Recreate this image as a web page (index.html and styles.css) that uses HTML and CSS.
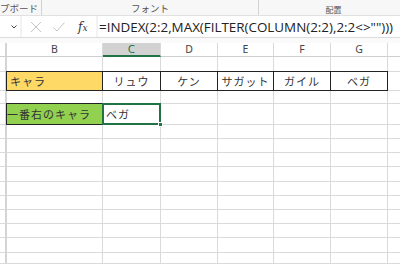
FILE: index.html
```html
<!DOCTYPE html>
<html lang="ja">
<head>
<meta charset="utf-8">
<link rel="stylesheet" href="styles.css">
</head>
<body>
<div class="app">
<div class="top">
  <div class="toolbar">
    <div class="grp g1"><span class="glabel">プボード</span></div>
    <div class="grp g2"><span class="glabel">フォント</span></div>
    <div class="grp g3"><span class="glabel small">配置</span></div>
  </div>
  <div class="fbar">
    <div class="namebox">
      <svg class="chev" width="6" height="4" viewBox="0 0 6 4"><polyline points="0.5,0.5 3,3 5.5,0.5" fill="none" stroke="#444" stroke-width="1"/></svg>
    </div>
    <div class="fbtns">
      <svg class="ico" width="12" height="12" viewBox="0 0 12 12"><path d="M1 1 L11 11 M11 1 L1 11" stroke="#c4c4c4" stroke-width="1" fill="none"/></svg>
      <svg class="ico" width="12" height="12" viewBox="0 0 12 12"><path d="M0.5 6.5 L4 10 L11.5 1.5" stroke="#c4c4c4" stroke-width="1" fill="none"/></svg>
      <span class="fx">f<span class="fxx">x</span></span>
    </div>
    <div class="formula">=INDEX(2:2,MAX(FILTER(COLUMN(2:2),2:2&lt;&gt;"")))</div>
  </div>
  <div class="gap"></div>
</div>
<div class="sheet">
  <div class="c hdr rh"></div>
  <div class="c hdr">B</div>
  <div class="c hdr sel">C</div>
  <div class="c hdr">D</div>
  <div class="c hdr">E</div>
  <div class="c hdr">F</div>
  <div class="c hdr">G</div>
  <div class="c hdr last"></div>

  <div class="c rh"></div><div class="c"></div><div class="c"></div><div class="c"></div><div class="c"></div><div class="c"></div><div class="c"></div><div class="c last"></div>

  <div class="c rh"></div>
  <div class="c bd yellow left">キャラ</div>
  <div class="c bd ctr">リュウ</div>
  <div class="c bd ctr">ケン</div>
  <div class="c bd ctr">サガット</div>
  <div class="c bd ctr">ガイル</div>
  <div class="c bd ctr">ベガ</div>
  <div class="c last"></div>

  <div class="c rh"></div><div class="c"></div><div class="c"></div><div class="c"></div><div class="c"></div><div class="c"></div><div class="c"></div><div class="c last"></div>

  <div class="c rh"></div>
  <div class="c bd green left2">一番右のキャラ</div>
  <div class="c active left">ベガ<span class="handle"></span></div>
  <div class="c"></div><div class="c"></div><div class="c"></div><div class="c"></div><div class="c last"></div>

  <div class="c rh"></div><div class="c"></div><div class="c"></div><div class="c"></div><div class="c"></div><div class="c"></div><div class="c"></div><div class="c last"></div>
  <div class="c rh"></div><div class="c"></div><div class="c"></div><div class="c"></div><div class="c"></div><div class="c"></div><div class="c"></div><div class="c last"></div>
  <div class="c rh"></div><div class="c"></div><div class="c"></div><div class="c"></div><div class="c"></div><div class="c"></div><div class="c"></div><div class="c last"></div>
  <div class="c rh"></div><div class="c"></div><div class="c"></div><div class="c"></div><div class="c"></div><div class="c"></div><div class="c"></div><div class="c last"></div>
  <div class="c rh"></div><div class="c"></div><div class="c"></div><div class="c"></div><div class="c"></div><div class="c"></div><div class="c"></div><div class="c last"></div>
  <div class="c rh"></div><div class="c"></div><div class="c"></div><div class="c"></div><div class="c"></div><div class="c"></div><div class="c"></div><div class="c last"></div>
  <div class="c rh"></div><div class="c"></div><div class="c"></div><div class="c"></div><div class="c"></div><div class="c"></div><div class="c"></div><div class="c last"></div>
  <div class="c rh"></div><div class="c"></div><div class="c"></div><div class="c"></div><div class="c"></div><div class="c"></div><div class="c"></div><div class="c last"></div>
  <div class="c rh"></div><div class="c"></div><div class="c"></div><div class="c"></div><div class="c"></div><div class="c"></div><div class="c"></div><div class="c last"></div>
  <div class="c rh"></div><div class="c"></div><div class="c"></div><div class="c"></div><div class="c"></div><div class="c"></div><div class="c"></div><div class="c last"></div>
</div>
</div>
</body>
</html>
```
FILE: styles.css
```css
* { box-sizing: border-box; }
html, body {
  margin: 0;
  padding: 0;
  background: #fff;
  font-family: "Noto Sans CJK JP", "Noto Sans", sans-serif;
}
.app {
  width: 400px;
  height: 264px;
}
.top {
  background: #f3f3f3;
  height: 43px;
  position: relative;
  z-index: 1;
  transform: translateZ(0);
}
.toolbar {
  height: 16px;
  background: #f7f7f7;
  border-bottom: 1px solid #e1e1e1;
  display: grid;
  grid-template-columns: 42px 217px 1fr;
}
.grp {
  height: 15px;
  display: flex;
  align-items: center;
  justify-content: center;
  border-right: 1px solid #d2d2d2;
}
.g1 { justify-content: flex-start; }
.g3 { border-right: none; padding-left: 8px; align-items: flex-end; }
.glabel {
  font-size: 9.5px;
  line-height: 12px;
  color: #555;
  white-space: nowrap;
}
.glabel.small { font-size: 8px; line-height: 10px; }
.fbar {
  height: 22px;
  display: flex;
  background: #f3f3f3;
  gap: 2px;
  border-bottom: 1px solid #dcdcdc;
}
.namebox {
  width: 20px;
  background: #fff;
  display: flex;
  align-items: center;
  justify-content: flex-end;
  padding-right: 3px;
  padding-top: 1px;
}
.fbtns {
  width: 74px;
  background: #fff;
  display: flex;
  align-items: center;
  padding-left: 8px;
  gap: 11px;
}
.fx {
  font-family: "DejaVu Serif", "Liberation Serif", serif;
  font-style: italic;
  font-size: 12px;
  color: #333;
  margin-left: 2px;
}
.fxx { font-size: 9px; }
.formula {
  flex: 1;
  min-width: 0;
  background: #fff;
  font-family: "Open Sans", "Noto Sans", sans-serif;
  font-size: 13.4px;
  color: #222;
  display: flex;
  align-items: center;
  padding-left: 1px;
  white-space: nowrap;
}
.gap {
  height: 5px;
  background: #fafafa;
}
.sheet {
  display: grid;
  grid-template-columns: 7px 96px 58px 57px 56px 57px 57px 12px;
  grid-template-rows: 14px 15px 19px 13px 21px 14px 14px 14px 15px 14px 14px 14px 14px 15px 11px;
}
.c {
  position: relative;
  border-right: 1px solid #dadada;
  border-bottom: 1px solid #dadada;
  font-size: 11px;
  color: #333;
  line-height: 1;
  display: flex;
  align-items: center;
  white-space: nowrap;
}
.rh {
  border-right: 2px solid #d4d4d4;
  background: #fff;
}
.hdr {
  justify-content: center;
  color: #444;
  font-family: "Noto Sans", sans-serif;
  font-size: 10.5px;
  border-bottom: 1px solid #cfcfcf;
}
.hdr.sel {
  background: #d2d2d2;
  color: #217346;
  border-bottom: 2px solid #217346;
  font-size: 11.5px;
}
.ctr { justify-content: center; letter-spacing: 1px; }
.left { padding-left: 3px; letter-spacing: 1px; }
.left2 { padding-left: 0; letter-spacing: 1px; }
.bd::after {
  content: "";
  position: absolute;
  left: -1px;
  top: -1px;
  right: -1px;
  bottom: -1px;
  border: 1px solid #222;
  pointer-events: none;
}
.yellow { background: #ffd966; }
.green { background: #92d050; }
.active::after {
  content: "";
  position: absolute;
  left: -1px;
  top: -1px;
  right: -1px;
  bottom: -1px;
  border: 2px solid #217346;
}
.handle {
  position: absolute;
  right: -3px;
  bottom: -3px;
  width: 5px;
  height: 5px;
  background: #217346;
  border: 1px solid #fff;
  z-index: 2;
}
.last { border-right: none; }
```
